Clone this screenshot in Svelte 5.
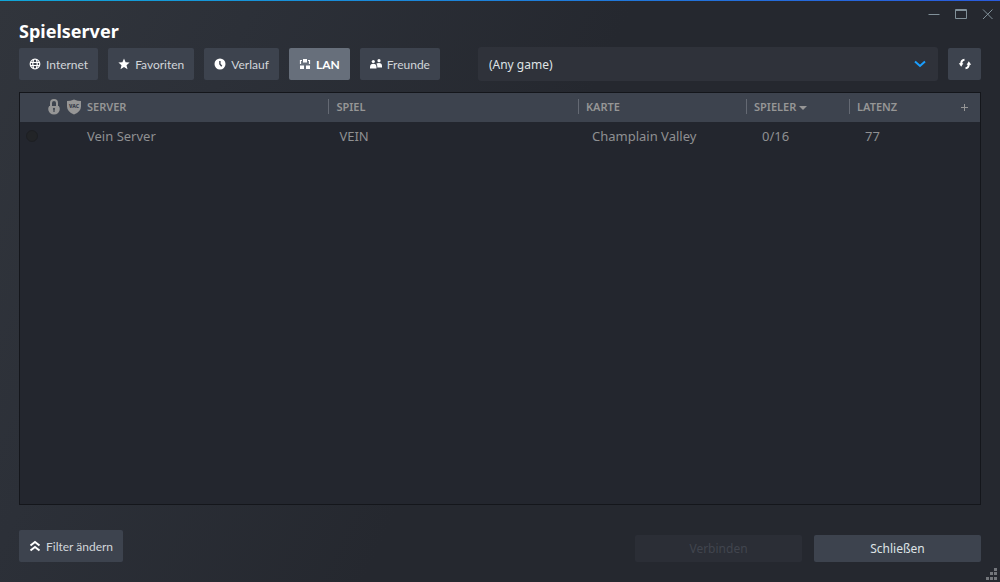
<script lang="ts">
  type Server = { name: string; game: string; map: string; players: string; ping: number };

  const tabs = [
    { id: 'internet', label: 'Internet' },
    { id: 'favorites', label: 'Favoriten' },
    { id: 'history', label: 'Verlauf' },
    { id: 'lan', label: 'LAN' },
    { id: 'friends', label: 'Freunde' },
  ];
  const servers: Server[] = [
    { name: 'Vein Server', game: 'VEIN', map: 'Champlain Valley', players: '0/16', ping: 77 },
  ];

  let active = $state('lan');
  let game = $state('any');
</script>

<div class="window">
  <!-- Window controls -->
  <div class="controls">
    <button aria-label="Minimieren">
      <svg width="12" height="12" viewBox="0 0 12 12"><path d="M.5 6.5h11" /></svg>
    </button>
    <button aria-label="Maximieren">
      <svg width="12" height="12" viewBox="0 0 12 12"><path d="M.5 1.5h11v9H.5zM0 2.5h12" /></svg>
    </button>
    <button aria-label="Fenster schließen">
      <svg width="12" height="12" viewBox="0 0 12 12"><path d="M1 1.500l9.500 9.500M10.500 1.500L1 11" /></svg>
    </button>
  </div>

  <h1>Spielserver</h1>

  <!-- Tabs and game filter -->
  <div class="toolbar">
    {#each tabs as tab (tab.id)}
      <button class="btn tab" class:active={active === tab.id} onclick={() => (active = tab.id)}>
        <svg class="icon" width="12" height="12" viewBox="0 0 12 12" aria-hidden="true">
          {#if tab.id === 'internet'}
            <circle cx="6" cy="6" r="4.800" class="line" />
            <path d="M1 4.500h10M1 7.500h10M4.500 1.500Q3 6 4.500 10.500M7.500 1.500Q9 6 7.500 10.500" class="line" />
          {:else if tab.id === 'favorites'}
            <path d="M6 .5l1.600 3.800 4 .3-3.100 2.600 1 4L6 9l-3.500 2.200 1-4L.4 4.600l4-.3z" />
          {:else if tab.id === 'history'}
            <path fill-rule="evenodd" d="M6 .5a5.500 5.500 0 100 11 5.500 5.500 0 000-11zM5.200 3h1.400v2.800l1.700 2-1.100.9-2-2.400z" />
          {:else if tab.id === 'lan'}
            <path d="M4 1h4v3.500H4zM1 7.500h4V11H1zM7 7.500h4V11H7z" />
            <path d="M3 2.500H1.500v3.500M9 2.500h1.500v3.500" class="line" />
          {:else}
            <circle cx="3.300" cy="3.500" r="1.600" />
            <circle cx="9" cy="2.700" r="1.600" />
            <path d="M0 10.500V9Q.2 5.800 3.300 5.800T6.500 9v1.500zM7.300 9.500V8.200Q7.300 6.600 6.200 5.800 7.300 4.900 9 4.900q3 0 3 3.100v1.500z" />
          {/if}
        </svg>
        {tab.label}
      </button>
    {/each}

    <div class="select">
      <select aria-label="Spiel" bind:value={game}>
        <option value="any">(Any game)</option>
      </select>
      <svg width="12" height="8" viewBox="0 0 12 8" aria-hidden="true"><path d="M1 1.500l5 4.500 5-4.500" /></svg>
    </div>

    <button class="btn refresh" aria-label="Aktualisieren">
      <svg class="icon" width="14" height="12" viewBox="0 0 14 12" aria-hidden="true">
        <path d="M6.500 1.800C4.200 2 3.200 3.500 3.200 6M7.500 10.200C9.800 10 10.800 8.500 10.800 6" class="thick" />
        <path d="M.8 5.200h4.600L3.200 8.800zM8.600 6.800h4.600L10.800 3.200z" />
      </svg>
    </button>
  </div>

  <!-- Server list -->
  <div class="list">
    <table>
      <colgroup>
        <col class="c-status" />
        <col class="c-lock" />
        <col class="c-vac" />
        <col />
        <col class="c-game" />
        <col class="c-map" />
        <col class="c-players" />
        <col class="c-ping" />
        <col class="c-add" />
      </colgroup>
      <thead>
        <tr>
          <th></th>
          <th class="mark" aria-label="Passwort">
            <svg width="12" height="16" viewBox="0 0 12 16">
              <path d="M3 7.500V4a3 3 0 016 0v3.500" class="shackle" />
              <path fill-rule="evenodd" d="M1.200 7h9.600q1 1.400 1 3A5.800 5.500 0 01.2 10q0-1.600 1-3zM6 8.700a1.100 1.100 0 00-.6 2V13h1.200v-2.300a1.100 1.100 0 00-.6-2z" />
            </svg>
          </th>
          <th class="mark" aria-label="VAC">
            <svg width="14" height="16" viewBox="0 0 14 16">
              <path d="M0 2Q3.500 2 7 .5 10.500 2 14 2v5.500q0 5-7 8-7-3-7-8z" />
              <text x="7" y="9" text-anchor="middle">VAC</text>
            </svg>
          </th>
          <th>SERVER</th>
          <th><span class="sep">SPIEL</span></th>
          <th><span class="sep">KARTE</span></th>
          <th aria-sort="descending"><span class="sep">SPIELER<i class="caret"></i></span></th>
          <th><span class="sep">LATENZ</span></th>
          <th class="mark"><button class="add" aria-label="Spalte hinzufügen"><svg width="8" height="8" viewBox="0 0 8 8"><path d="M0 4.500h7M3.500 1v7" /></svg></button></th>
        </tr>
      </thead>
      <tbody>
        {#each servers as server}
          <tr>
            <td class="mark"><i class="dot"></i></td>
            <td></td>
            <td></td>
            <td>{server.name}</td>
            <td class="game">{server.game}</td>
            <td class="map">{server.map}</td>
            <td class="num">{server.players}</td>
            <td class="num">{server.ping}</td>
            <td></td>
          </tr>
        {/each}
      </tbody>
    </table>
  </div>

  <!-- Footer -->
  <div class="footer">
    <button class="btn filter">
      <svg class="icon" width="12" height="12" viewBox="0 0 12 12" aria-hidden="true">
        <path d="M1.500 5.500L6 2l4.500 3.500M1.500 10.500L6 7l4.500 3.500" class="thick" />
      </svg>
      Filter ändern
    </button>
    <div class="actions">
      <button class="btn wide" disabled>Verbinden</button>
      <button class="btn wide">Schließen</button>
    </div>
  </div>

  <svg class="grip" width="12" height="12" viewBox="0 0 12 12" aria-hidden="true">
    <path d="M9 0h3v3H9zM5 4h3v3H5zM9 4h3v3H9zM1 9h3v3H1zM5 9h3v3H5zM9 9h3v3H9z" />
  </svg>
</div>

<style>
  :global(body) {
    margin: 0;
    background: #25282f;
  }
  .window {
    position: relative;
    box-sizing: border-box;
    display: flex;
    flex-direction: column;
    min-height: 100vh;
    padding: 0 19px 20px;
    background:
      linear-gradient(90deg, #10a6d8, #2a5bdc) top / 100% 1px no-repeat,
      linear-gradient(115deg, #31353c 0%, #2c3038 20%, #25282f 50%);
    color: #dfe3e6;
    font-family: "Noto Sans", sans-serif;
    font-size: 12px;
  }
  button, select {
    border: 0;
    font: inherit;
    color: inherit;
  }
  .controls {
    display: flex;
    justify-content: flex-end;
    gap: 15px;
    height: 19px;
    margin-right: -13px;
  }
  .controls button {
    display: flex;
    align-items: center;
    padding: 8px 0 0;
    background: none;
  }
  .controls path {
    fill: none;
    stroke: #819099;
  }
  h1 {
    margin: 0;
    font-size: 18px;
    line-height: 24px;
    font-weight: 700;
    color: #fff;
  }
  .toolbar {
    display: flex;
    align-items: center;
    gap: 10px;
    margin-top: 4px;
  }
  .btn {
    display: flex;
    align-items: center;
    justify-content: center;
    gap: 5px;
    height: 32px;
    padding: 0 10px;
    border-radius: 2px;
    background: #3d434e;
    white-space: nowrap;
    cursor: pointer;
  }
  .btn:hover { background: #464d59; }
  .tab, .filter {
    color: #d2d6da;
    font-family: Lato, "Noto Sans", sans-serif;
  }
  .btn.active {
    background: #676f7b;
    color: #fff;
    font-weight: 700;
  }
  .icon { fill: #fff; }
  .line {
    fill: none;
    stroke: #fff;
    stroke-width: 1.2;
  }
  .thick {
    fill: none;
    stroke: #fff;
    stroke-width: 2;
  }
  .select {
    display: flex;
    align-items: center;
    flex: 1;
    margin-left: 28px;
    height: 34px;
    border-radius: 3px;
    background: #2f323a;
  }
  .select select {
    flex: 1;
    height: 34px;
    margin-right: -24px;
    padding: 0 32px 0 11px;
    background: none;
    appearance: none;
  }
  .select svg {
    margin-right: 12px;
    pointer-events: none;
  }
  .select path {
    fill: none;
    stroke: #1a9fff;
    stroke-width: 2;
  }
  .refresh {
    width: 33px;
    padding: 0;
  }
  .list {
    flex: 1;
    margin-top: 11px;
    border: 1px solid #14161b;
    background: #23262e;
  }
  table {
    width: 100%;
    border-collapse: collapse;
    table-layout: fixed;
  }
  .c-status { width: 24px; }
  .c-lock { width: 20px; }
  .c-vac { width: 20px; }
  .c-game { width: 26%; }
  .c-map { width: 168px; }
  .c-players { width: 103px; }
  .c-ping { width: 101px; }
  .c-add { width: 30px; }
  thead { background: #3d434e; }
  th {
    height: 27px;
    padding: 0 3px 2px;
    color: #969696;
    font-size: 11px;
    font-weight: 600;
    text-align: left;
    white-space: nowrap;
  }
  .mark {
    padding: 0 0 2px;
    text-align: center;
  }
  .mark svg {
    display: block;
    margin: 0 auto;
    fill: #969696;
  }
  .mark text {
    fill: #3d434e;
    font-size: 5px;
    font-weight: 900;
  }
  .mark .shackle {
    fill: none;
    stroke: #969696;
    stroke-width: 2;
  }
  .sep {
    display: block;
    margin-left: -3px;
    padding-left: 7px;
    border-left: 1px solid #646973;
    line-height: 15px;
  }
  .caret {
    display: inline-block;
    margin-left: 3px;
    border: 4px solid transparent;
    border-top-color: #969696;
    border-bottom: 0;
    vertical-align: middle;
  }
  .add {
    display: block;
    margin: 0 auto;
    padding: 0;
    background: none;
  }
  .add path {
    stroke: #969696;
  }
  td {
    height: 27px;
    padding: 0 3px;
    color: #8f9092;
    font-size: 13px;
    white-space: nowrap;
  }
  td.mark { padding: 0; }
  .dot {
    display: block;
    box-sizing: border-box;
    width: 12px;
    height: 12px;
    margin: 0 auto;
    border: 1px solid #1d1f23;
    border-radius: 50%;
    background: #222427;
  }
  td.game { padding-left: 11px; }
  td.map { padding-left: 14px; }
  td.num { padding-left: 16px; }
  .footer {
    display: flex;
    justify-content: space-between;
    align-items: flex-start;
    margin-top: 25px;
  }
  .actions {
    display: flex;
    gap: 12px;
    padding-top: 5px;
  }
  .wide {
    width: 167px;
    height: 27px;
  }
  .wide:disabled {
    background: #2b2e36;
    color: #41454e;
    cursor: default;
  }
  .grip {
    position: absolute;
    right: 3px;
    bottom: 2px;
    fill: #73767b;
  }
</style>
